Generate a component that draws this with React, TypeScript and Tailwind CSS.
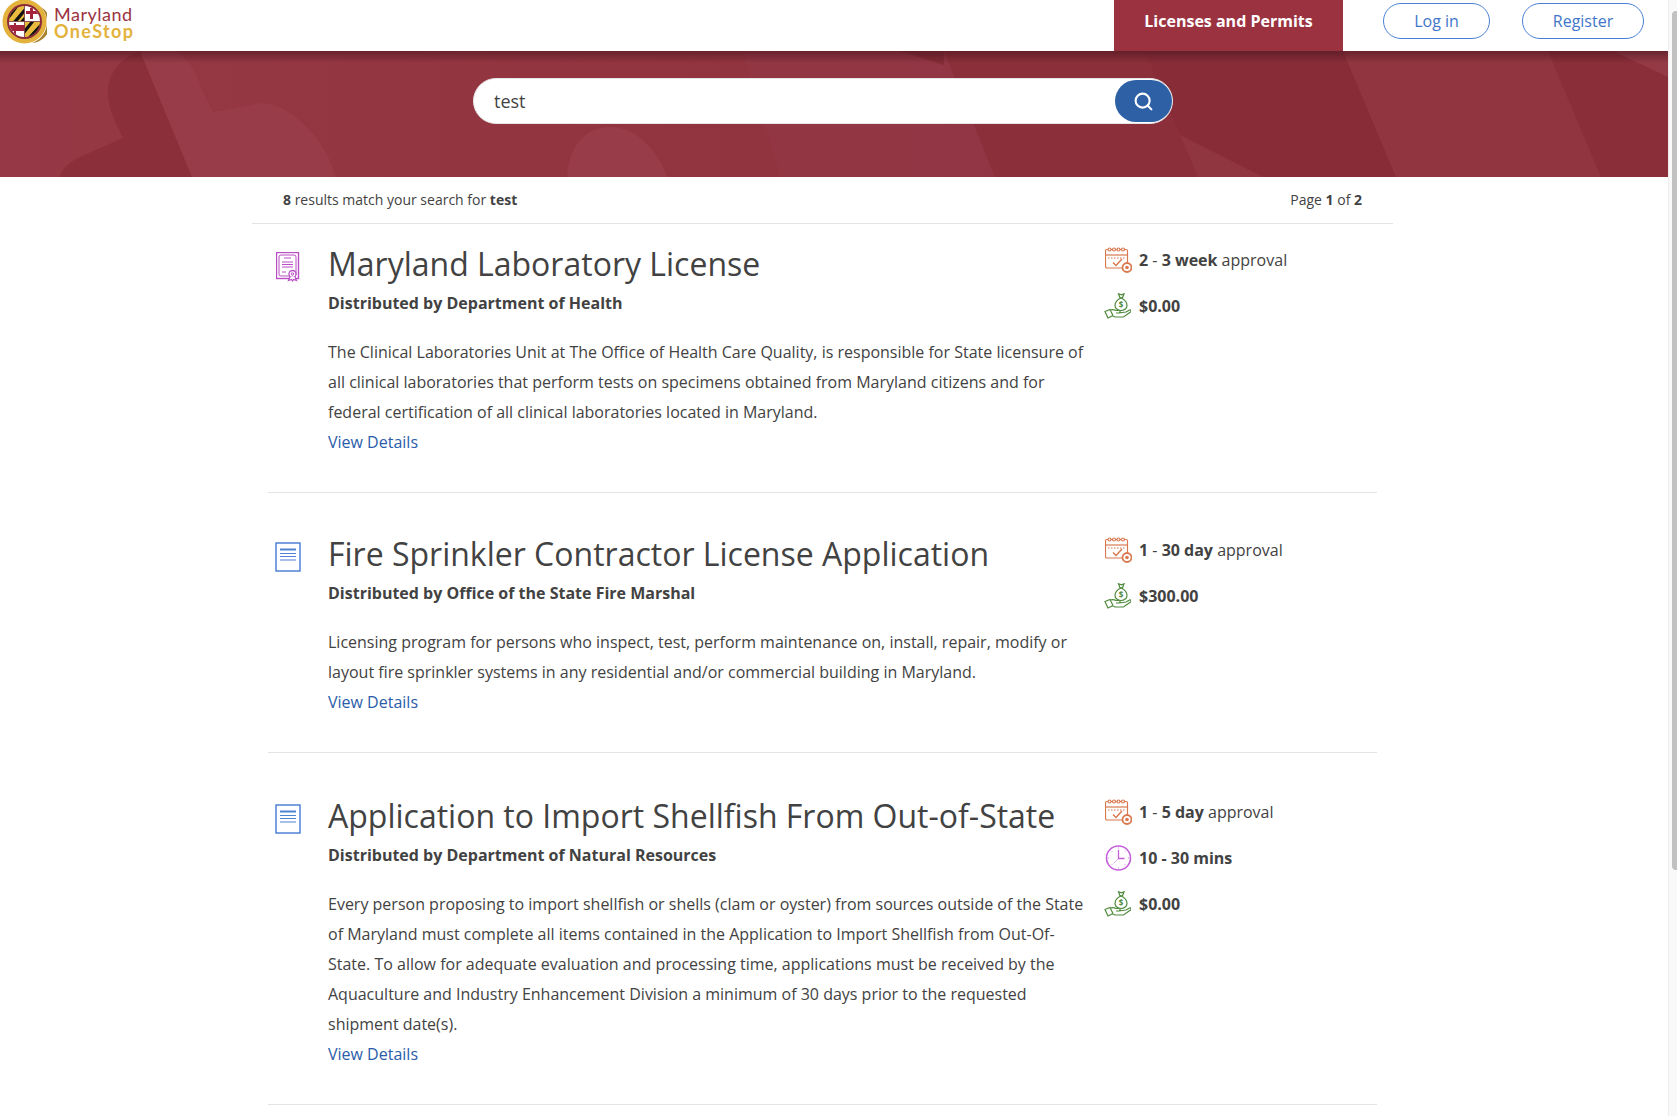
import { Search } from "lucide-react";

const results = [
  {
    title: "Maryland Laboratory License",
    by: "Department of Health",
    icon: "cert",
    text: "The Clinical Laboratories Unit at The Office of Health Care Quality, is responsible for State licensure of all clinical laboratories that perform tests on specimens obtained from Maryland citizens and for federal certification of all clinical laboratories located in Maryland.",
    approval: ["2", "3 week"],
    mins: null,
    cost: "$0.00",
  },
  {
    title: "Fire Sprinkler Contractor License Application",
    by: "Office of the State Fire Marshal",
    icon: "doc",
    text: "Licensing program for persons who inspect, test, perform maintenance on, install, repair, modify or layout fire sprinkler systems in any residential and/or commercial building in Maryland.",
    approval: ["1", "30 day"],
    mins: null,
    cost: "$300.00",
  },
  {
    title: "Application to Import Shellfish From Out-of-State",
    by: "Department of Natural Resources",
    icon: "doc",
    text: "Every person proposing to import shellfish or shells (clam or oyster) from sources outside of the State of Maryland must complete all items contained in the Application to Import Shellfish from Out-Of-State. To allow for adequate evaluation and processing time, applications must be received by the Aquaculture and Industry Enhancement Division a minimum of 30 days prior to the requested shipment date(s).",
    approval: ["1", "5 day"],
    mins: "10 - 30 mins",
    cost: "$0.00",
  },
];

function Logo() {
  return (
    <svg width="47" height="44" viewBox="0 0 47 44" className="shrink-0">
      <defs>
        <clipPath id="flag">
          <circle cx="24.500" cy="21.500" r="15.500" />
        </clipPath>
      </defs>
      <circle cx="24.500" cy="21.500" r="22" fill="#e3b23c" />
      <path d="M41 7a22 22 0 0 1-9 36 19.500 19.500 0 0 0 9-36z" fill="#a8812c" />
      <circle cx="24.500" cy="21.500" r="17.500" fill="#8c2a3a" />
      <g clipPath="url(#flag)">
        <rect x="9" y="6" width="15.500" height="15.500" fill="#e8bb3f" />
        <path d="M9 14l6-8h4L9 19zM13 21.500L24.500 8v5l-7 8.500zM20 21.500l4.500-5v5z" fill="#111" />
        <rect x="24.500" y="21.500" width="15.500" height="15.500" fill="#e8bb3f" />
        <path d="M24.500 29l6-7.500h4L24.500 34zM28 37l12-13v5l-7 8zM35 37l5-5v5z" fill="#111" />
        <rect x="24.500" y="6" width="15.500" height="15.500" fill="#fff" />
        <path d="M26 11h14v3H26zM30 8h3v11h-3z" fill="#a3243a" />
        <rect x="9" y="21.500" width="15.500" height="15.500" fill="#fff" />
        <path d="M9 25h15.500v6H9z" fill="#a3243a" />
        <path d="M14 23h2v12h-2z" fill="#a3243a" />
        <path d="M24.500 6v31M9 21.500h31" stroke="#5d1622" strokeWidth="0.600" />
      </g>
    </svg>
  );
}

function BannerArt() {
  return (
    <svg className="absolute inset-0 w-full h-full" viewBox="0 0 1668 126" preserveAspectRatio="none">
      <defs>
        <linearGradient id="base" x1="0" x2="1" y1="0" y2="0">
          <stop offset="0" stopColor="#963845" />
          <stop offset="0.45" stopColor="#91343f" />
          <stop offset="1" stopColor="#8c303b" />
        </linearGradient>
        <linearGradient id="topShade" x1="0" x2="0" y1="0" y2="1">
          <stop offset="0" stopColor="#3d1018" stopOpacity="0.5" />
          <stop offset="1" stopColor="#3d1018" stopOpacity="0" />
        </linearGradient>
      </defs>
      <rect width="1668" height="126" fill="url(#base)" />
      {/* left hand shape */}
      <path d="M140 0C118 8 108 24 108 42C108 58 116 72 123 87L80 106C68 112 62 118 60 126H192Z" fill="#8b2f3a" />
      <path d="M140 0H176C190 10 197 22 200 34L213 61L262 52C290 52 328 90 335 126H192Z" fill="#983c49" />
      <path d="M567 126C568 100 582 76 610 76C640 76 660 105 667 126Z" fill="#983c49" />
      {/* right side bands */}
      <path d="M743 0H947L995 126H780Z" fill="#94374a" fillOpacity="0.5" />
      <path d="M900 0H944V14Z" fill="#832c36" />
      <path d="M1145 0H1343L1396 126H1198L1180 84Z" fill="#882d38" />
      <path d="M995 126L944 0H1145L1180 84L1198 126Z" fill="#8b2f3a" />
      <path d="M1180 84L1263 126H1198Z" fill="#903641" />
      <path d="M1343 0H1548L1601 126H1396Z" fill="#913641" />
      <path d="M1548 0H1668V126H1601Z" fill="#8a2e39" />
      <path d="M1613 0H1668V26Z" fill="#943a46" />
      <rect width="1668" height="12" fill="url(#topShade)" />
    </svg>
  );
}

function CertIcon() {
  return (
    <svg width="24" height="30" viewBox="0 0 24 30" fill="none" stroke="#b84fc6" strokeWidth="1" className="ml-[1px]">
      <rect x="0.500" y="0.500" width="22" height="26" strokeWidth="1.400" />
      <rect x="3" y="3" width="17" height="21" rx="2" />
      <path d="M8 6h7M6 10h11M6 12.500h11M6 15h11M6 20h4" strokeWidth="1.200" />
      <circle cx="16.500" cy="22" r="3.500" fill="#fff" strokeWidth="1.300" />
      <circle cx="16.500" cy="22" r="1.200" />
      <path d="M14 25l-1.500 3.500 3-1 1 1.500 1-1.500 3 1-1.500-3.500" fill="#fff" strokeWidth="1.200" />
    </svg>
  );
}

function DocIcon() {
  return (
    <svg width="26" height="30" viewBox="0 0 26 30" fill="none" stroke="#4f82d3">
      <rect x="1" y="1" width="24" height="28" strokeWidth="1.500" />
      <path d="M5 7.500h16" strokeWidth="2" />
      <path d="M5 11.500h16M5 14.500h16M5 18h16" strokeWidth="1.200" />
    </svg>
  );
}

function CalendarIcon() {
  return (
    <svg width="27" height="26" viewBox="0 0 27 26" fill="none" stroke="#d9784f" strokeWidth="1.200">
      <path d="M18 21H2a1.500 1.500 0 0 1-1.500-1.500V4A1.500 1.500 0 0 1 2 2.500h19A1.500 1.500 0 0 1 22.500 4v12" />
      <path d="M0.500 8h22" />
      <circle cx="4.500" cy="2.500" r="1.500" fill="#fff" />
      <circle cx="9" cy="2.500" r="1.500" fill="#fff" />
      <circle cx="13.500" cy="2.500" r="1.500" fill="#fff" />
      <circle cx="18" cy="2.500" r="1.500" fill="#fff" />
      <path d="M3 11h17" strokeDasharray="1.500 1.500" />
      <path d="M8 15.500l3 3 6-6.500" strokeWidth="1.500" />
      <circle cx="22" cy="20.500" r="4.500" fill="#fff" strokeWidth="1.800" />
      <circle cx="22" cy="20.500" r="1.800" fill="#d9784f" stroke="none" />
    </svg>
  );
}

function MoneyIcon() {
  return (
    <svg width="27" height="26" viewBox="0 0 27 26" fill="none" stroke="#4f8a3c" strokeWidth="1.200" className="-ml-[1px] mr-[1px]">
      <path d="M17 5c-3.500 1.500-6 4.500-6 7.500a6 5 0 0 0 12 0c0-3-2.500-6-6-7.500z" fill="#fff" />
      <path d="M14.500.8l1.500 4h2.500l1.500-4-2.500 1z" />
      <text x="17" y="15" fontSize="8" fontWeight="700" fill="#4f8a3c" stroke="none" textAnchor="middle" fontFamily="'Open Sans', sans-serif">$</text>
      <path d="M1 18.500l5-2 3 6-5 2.500z" />
      <path d="M6 17.500c2-1.500 4-1 6 0h3c1.500 0 1.500 2.500 0 2.500h-3M15 20l7-1 3.500-2c1.500-.5 2 1 1 2l-7 5H11l-3-1.500" fill="#fff" />
    </svg>
  );
}

function ClockIcon() {
  return (
    <svg width="27" height="26" viewBox="0 0 26 26" fill="none" stroke="#c55fdc">
      <circle cx="13" cy="13" r="12" strokeWidth="1.600" />
      <path d="M13 5v8.500h6" strokeWidth="1.300" />
      <path d="M13 13.500l-5 5" strokeWidth="0.500" />
      <path d="M13 2.500v1M13 22.500v1M2.500 13h1M22.500 13h1M6 6l.7.700M19.300 19.300l.7.700M20 6l-.7.700M6.700 19.300l-.7.700" strokeWidth="0.800" />
    </svg>
  );
}

export default function App() {
  return (
    <div className="flex h-screen overflow-hidden bg-white text-[#424242] font-['Open_Sans',sans-serif]">
      <div className="flex-1 min-w-0">
        {/* ヘッダー */}
        <header className="flex h-[51px] items-start pr-[24px]">
          <div className="flex">
            <Logo />
            <div className="ml-[7px] pt-[5px] font-['Lato',sans-serif]">
              <div className="text-[18px] leading-[18px] tracking-[0.5px] text-[#9b3341]">Maryland</div>
              <div className="text-[18px] leading-[17px] font-bold tracking-[1.4px] text-[#e3b23c]">OneStop</div>
            </div>
          </div>
          <a className="ml-auto flex h-[51px] w-[229px] items-center justify-center bg-[#9b3240] text-[16px] font-bold text-white pb-[10px]">
            Licenses and Permits
          </a>
          <button className="ml-[40px] mt-[3px] h-[36px] w-[107px] rounded-full border border-[#4a80d4] text-[16px] text-[#3f76c9]">
            Log in
          </button>
          <button className="ml-[32px] mt-[3px] h-[36px] w-[122px] rounded-full border border-[#4a80d4] text-[16px] text-[#3f76c9]">
            Register
          </button>
        </header>

        {/* 検索バー */}
        <div className="relative h-[126px] pt-[27px] pl-[473px]">
          <BannerArt />
          <div className="relative flex h-[46px] w-[700px] items-center rounded-full border border-[#e6e6e6] bg-white pl-[20px]">
            <input
              readOnly
              value="test"
              className="flex-1 min-w-0 bg-transparent text-[18px] text-[#424242] outline-none"
            />
            <button className="flex h-[42px] w-[57px] items-center justify-center rounded-[26px] bg-[#2d60a5] text-white">
              <Search size={21} strokeWidth={2.4} />
            </button>
          </div>
        </div>

        <main className="ml-[252px] w-[1141px]">
          <div className="flex h-[47px] items-center justify-between border-b border-[#e3e3e3] px-[31px] pb-[2px] text-[14px]">
            <span>
              <b>8</b> results match your search for <b>test</b>
            </span>
            <span>
              Page <b>1</b> of <b>2</b>
            </span>
          </div>

          <div className="mx-[16px]">
            {results.map((r) => (
              <div key={r.title} className="flex border-b border-[#e3e3e3] pt-[42px] first:pt-[21px] last:pt-[44px] pb-[35px]">
                <div className="w-[60px] shrink-0 pl-[7px] pt-[7px]">
                  {r.icon === "cert" ? <CertIcon /> : <DocIcon />}
                </div>
                <div className="w-[777px] shrink-0 pr-[18px]">
                  <h2 className="text-[32px] leading-[38px]">{r.title}</h2>
                  <div className="mt-[8px] text-[16px] leading-[24px] font-bold">Distributed by {r.by}</div>
                  <p className="mt-[22px] text-[16px] leading-[30px]">{r.text}</p>
                  <a className="block text-[16px] leading-[30px] text-[#2a5caa]">View Details</a>
                </div>
                <div className="flex flex-col gap-[20px] pt-[2px] text-[16px] leading-[26px]">
                  <div className="flex h-[26px] items-center gap-[7px]">
                    <CalendarIcon />
                    <span>
                      <b>{r.approval[0]}</b> - <b>{r.approval[1]}</b> approval
                    </span>
                  </div>
                  {r.mins && (
                    <div className="flex h-[26px] items-center gap-[7px]">
                      <ClockIcon />
                      <b>{r.mins}</b>
                    </div>
                  )}
                  <div className="flex h-[26px] items-center gap-[7px]">
                    <MoneyIcon />
                    <b>{r.cost}</b>
                  </div>
                </div>
              </div>
            ))}
          </div>
        </main>
      </div>

      {/* スクロールバー */}
      <div className="w-[9px] shrink-0 overflow-hidden border-l border-[#ececec] bg-[#f9f9f9] pt-[11px] pl-[3px]">
        <div className="h-[859px] w-[8px] rounded-[4px] bg-[#c1c1c1]" />
      </div>
    </div>
  );
}
